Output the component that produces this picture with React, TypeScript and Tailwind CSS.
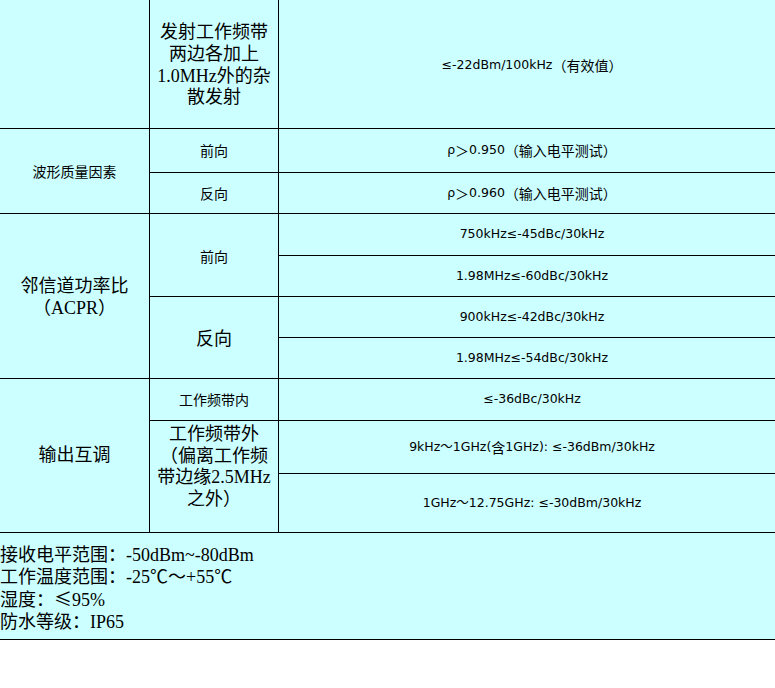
const song = "font-['Liberation_Serif','Noto_Sans_CJK_SC',serif] text-[18px] leading-[21.6px]";
const hei = "font-['Noto_Sans_CJK_SC',sans-serif] text-[14px]";
const tahoma = "font-['DejaVu_Sans','Noto_Sans_CJK_SC',sans-serif] text-[12.5px]";

const cell = 'flex items-center justify-center bg-[#ccffff] text-center text-black';

// The CJK runs inside the Latin spec text fall back to a larger face in the original
function Cjk({ children }: { children: React.ReactNode }) {
  return <span className="font-['Noto_Sans_CJK_SC',sans-serif] text-[14px]">{children}</span>;
}

export default function App() {
  return (
    <div className="w-full overflow-hidden bg-white">
      <div className="grid w-[785px] grid-cols-[149px_128px_1fr] grid-rows-[128px_43px_40px_41px_40px_40px_40px_41px_52px_58px_106px] gap-px bg-black pb-px">
        {/* 杂散发射 */}
        <div className={cell} />
        <div className={`${cell} ${song} pt-[3px]`}>
          发射工作频带
          <br />
          两边各加上
          <br />
          1.0MHz外的杂
          <br />
          散发射
        </div>
        <div className={`${cell} ${tahoma} pt-[2px]`}>
          ≤-22dBm/100kHz<Cjk>（有效值）</Cjk>
        </div>

        {/* 波形质量因素 */}
        <div className={`${cell} ${hei} row-span-2`}>波形质量因素</div>
        <div className={`${cell} ${hei}`}>前向</div>
        <div className={`${cell} ${tahoma}`}>
          ρ<Cjk>＞</Cjk>0.950<Cjk>（输入电平测试）</Cjk>
        </div>
        <div className={`${cell} ${hei}`}>反向</div>
        <div className={`${cell} ${tahoma}`}>
          ρ<Cjk>＞</Cjk>0.960<Cjk>（输入电平测试）</Cjk>
        </div>

        {/* ACPR */}
        <div className={`${cell} ${song} row-span-4 flex-col pt-[4px]`}>
          <span>邻信道功率比</span>
          <span>（ACPR）</span>
        </div>
        <div className={`${cell} ${hei} row-span-2 pt-[2px]`}>前向</div>
        <div className={`${cell} ${tahoma}`}>750kHz≤-45dBc/30kHz</div>
        <div className={`${cell} ${tahoma}`}>1.98MHz≤-60dBc/30kHz</div>
        <div className={`${cell} ${song} row-span-2 pt-[4px]`}>反向</div>
        <div className={`${cell} ${tahoma}`}>900kHz≤-42dBc/30kHz</div>
        <div className={`${cell} ${tahoma}`}>1.98MHz≤-54dBc/30kHz</div>

        {/* 输出互调 */}
        <div className={`${cell} ${song} row-span-3`}>输出互调</div>
        <div className={`${cell} ${hei}`}>工作频带内</div>
        <div className={`${cell} ${tahoma}`}>≤-36dBc/30kHz</div>
        <div className={`${cell} ${song} row-span-2 items-start pt-[3px]`}>
          工作频带外
          <br />
          （偏离工作频
          <br />
          带边缘2.5MHz
          <br />
          之外）
        </div>
        <div className={`${cell} ${tahoma}`}>
          9kHz～1GHz(<Cjk>含</Cjk>1GHz): ≤-36dBm/30kHz
        </div>
        <div className={`${cell} ${tahoma}`}>1GHz～12.75GHz: ≤-30dBm/30kHz</div>

        {/* 其他指标 */}
        <div className={`col-span-3 bg-[#ccffff] pt-[12px] text-black ${song}`}>
          <p>接收电平范围：-50dBm~-80dBm</p>
          <p>工作温度范围：-25℃～+55℃</p>
          <p>
            湿度：<span className="font-['Noto_Sans_CJK_SC',sans-serif]">≤</span>95%
          </p>
          <p>防水等级：IP65</p>
        </div>
      </div>
    </div>
  );
}
